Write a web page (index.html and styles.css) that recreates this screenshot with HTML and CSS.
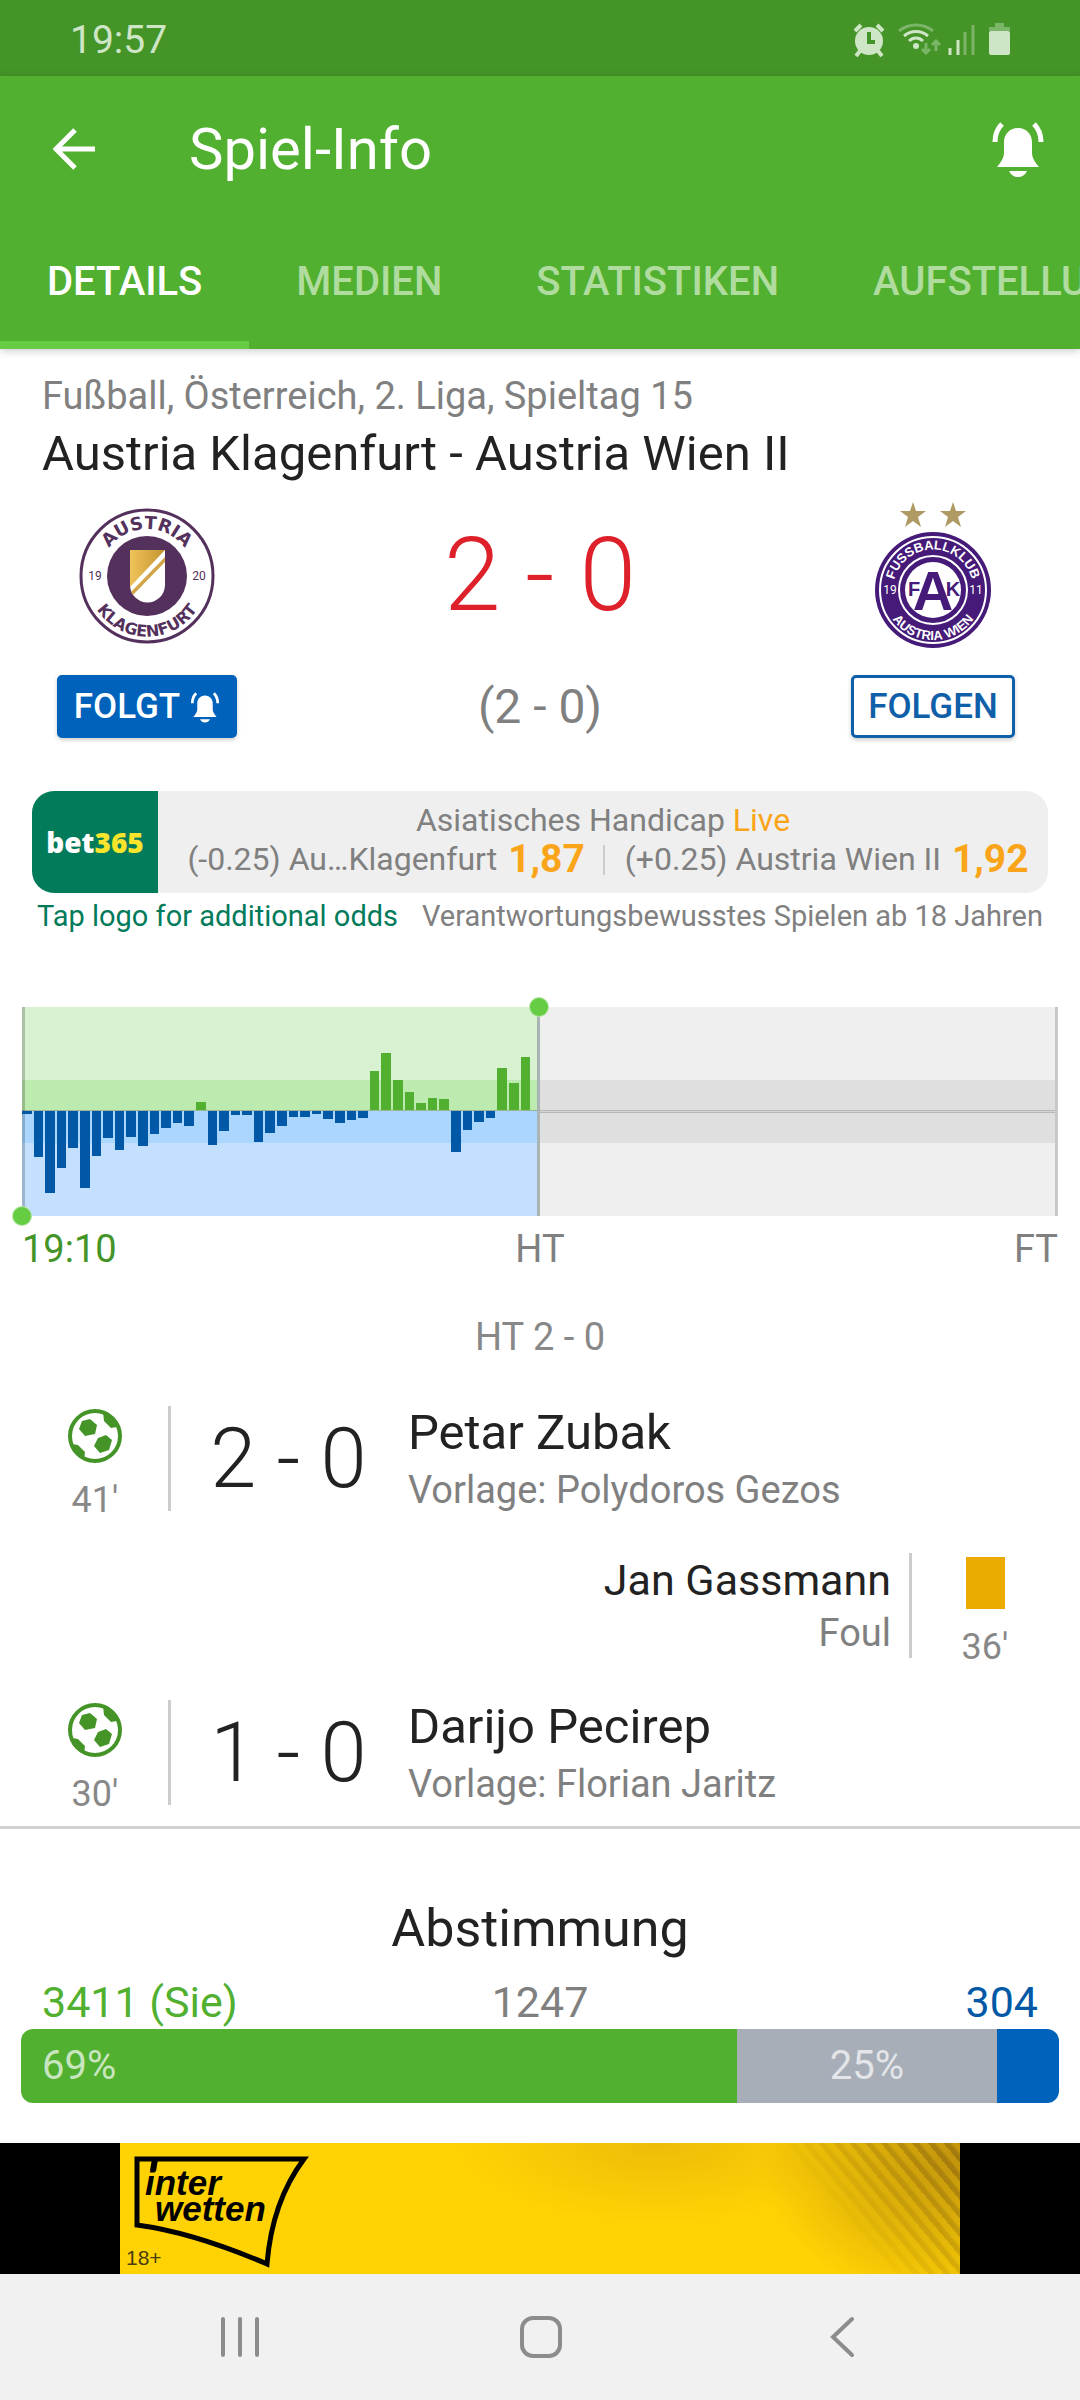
FILE: index.html
```html
<!DOCTYPE html>
<html lang="de">

<head>
    <meta charset="UTF-8">
    <meta name="viewport" content="width=device-width, initial-scale=1.0">
    <title>Spiel-Info</title>
    <link rel="stylesheet" href="styles.css">
</head>

<body>
    <svg class="defs" width="0" height="0">
        <symbol id="bell" viewBox="0 0 54 58">
            <path d="M27 8c-9 0-14 7-14 14v11c0 5-3 9-7 14h42c-4-5-7-9-7-14V22c0-7-5-14-14-14zM18 51c2 4 5 6 9 6s7-2 9-6z" fill="currentColor"/>
            <path d="M11 4C6 9 4 15 4 22M43 4c5 5 7 11 7 18" fill="none" stroke="currentColor" stroke-width="5"/>
        </symbol>
        <symbol id="ball" viewBox="0 0 54 54">
            <circle cx="27" cy="27" r="25" fill="#fff" stroke="#449428" stroke-width="4"/>
            <path d="M14 12l8-2 7 6-2 9-10 2-6-7zM30 29l8-3 6 5-3 10-9 3-6-7zM35 3l1 9 7 7 6-1C48 11 43 5 35 3zM4 35l6 1 7 7-1 8C9 48 5 42 4 35z" fill="#449428"/>
        </symbol>
    </svg>

    <div class="status-bar">
        <span>19:57</span>
        <svg class="status-icons" width="160" height="36" viewBox="0 0 160 36">
            <circle cx="17" cy="19" r="14" fill="#cfe6c6"/>
            <path d="M3 9l6-6M31 9l-6-6M8 29l-4 5M26 29l4 5" stroke="#cfe6c6" stroke-width="4"/>
            <path d="M17 10v10h6" fill="none" stroke="#449428" stroke-width="4"/>
            <g fill="none" stroke="#cfe6c6" stroke-width="3">
                <path d="M47 9c10-8 24-8 34 0" opacity=".4"/>
                <path d="M52 14c7-6 17-6 24 0M57 19c4-4 10-4 14 0"/>
            </g>
            <circle cx="64" cy="24" r="3" fill="#cfe6c6"/>
            <path d="M74 21v10M70 27l4 4 4-4M84 29V19M80 23l4-4 4 4" fill="none" stroke="#cfe6c6" stroke-width="3" opacity=".4"/>
            <path d="M98 26v7M106 18v15" stroke="#cfe6c6" stroke-width="3"/>
            <path d="M113 10v23M121 3v30" stroke="#cfe6c6" stroke-width="3" opacity=".4"/>
            <path d="M137 9V5h6V1h9v4h6v4z" fill="#cfe6c6" opacity=".4"/>
            <rect x="137" y="9" width="21" height="24" rx="2" fill="#cfe6c6"/>
        </svg>
    </div>

    <header>
        <div class="toolbar">
            <button class="icon-button" aria-label="Zurück">
                <svg width="42" height="42" viewBox="0 0 42 42"><path d="M22 2L3 21l19 19M3 21h39" fill="none" stroke="#fff" stroke-width="5"/></svg>
            </button>
            <h1>Spiel-Info</h1>
            <button class="icon-button" aria-label="Benachrichtigungen">
                <svg width="54" height="58"><use href="#bell"/></svg>
            </button>
        </div>
        <nav class="tabs">
            <a href="#details" class="active">DETAILS</a>
            <a href="#medien">MEDIEN</a>
            <a href="#statistiken">STATISTIKEN</a>
            <a href="#aufstellungen">AUFSTELLUNGEN</a>
        </nav>
    </header>

    <main id="details">
        <section class="match">
            <p class="league">Fußball, Österreich, 2. Liga, Spieltag 15</p>
            <h2>Austria Klagenfurt - Austria Wien II</h2>

            <div class="teams">
                <svg class="crest" width="180" height="160" viewBox="0 0 180 160">
                    <defs>
                        <linearGradient id="gold"><stop offset="0" stop-color="#f0c35a"/><stop offset="1" stop-color="#c49430"/></linearGradient>
                        <clipPath id="shield"><path d="M73 50h35v35a17 17 0 0 1-35 0z"/></clipPath>
                        <path id="k-top" d="M47 95a47 47 0 1 1 86 0"/>
                        <path id="k-bottom" d="M34 55a60 60 0 1 0 112 0"/>
                    </defs>
                    <circle cx="90" cy="76" r="66" fill="#fff" stroke="#54305c" stroke-width="3"/>
                    <circle cx="90" cy="76" r="40" fill="#54305c"/>
                    <g clip-path="url(#shield)">
                        <path d="M73 50h35v60H73z" fill="#fff"/>
                        <path d="M73 50h35L73 87z" fill="url(#gold)"/>
                        <path d="M73 93l35-36v5L73 98z" fill="#d2a548"/>
                    </g>
                    <g class="klagenfurt">
                        <text font-size="18"><textPath href="#k-top" startOffset="50%">AUSTRIA</textPath></text>
                        <text font-size="16"><textPath href="#k-bottom" startOffset="50%">KLAGENFURT</textPath></text>
                    </g>
                    <g class="crest-year" fill="#54305c">
                        <text x="38" y="80">19</text>
                        <text x="142" y="80">20</text>
                    </g>
                </svg>
                <div class="score">2 - 0</div>
                <svg class="crest" width="180" height="160" viewBox="0 0 180 160">
                    <defs>
                        <path id="w-top" d="M54 107a40 40 0 1 1 72 0"/>
                        <path id="w-bottom" d="M43 73a50 50 0 1 0 94 0"/>
                        <path id="star" d="M0-13l3 9h10l-8 6 3 10-8-6-8 6 3-10-8-6h10z" fill="#ae9a62"/>
                    </defs>
                    <use href="#star" x="70" y="15"/>
                    <use href="#star" x="110" y="15"/>
                    <circle cx="90" cy="90" r="58" fill="#451a78"/>
                    <circle cx="90" cy="90" r="53" fill="none" stroke="#fff" stroke-width="2"/>
                    <circle cx="90" cy="90" r="34" fill="none" stroke="#fff" stroke-width="2"/>
                    <circle cx="90" cy="90" r="28" fill="#fff"/>
                    <g class="fak">
                        <text x="71" y="96" font-size="20">F</text>
                        <text x="110" y="96" font-size="20">K</text>
                        <text x="90" y="110" font-size="56">A</text>
                    </g>
                    <g class="wien">
                        <text><textPath href="#w-top" startOffset="50%">FUSSBALLKLUB</textPath></text>
                        <text><textPath href="#w-bottom" startOffset="50%">AUSTRIA WIEN</textPath></text>
                    </g>
                    <g class="crest-year" fill="#fff">
                        <text x="47" y="94">19</text>
                        <text x="133" y="94">11</text>
                    </g>
                </svg>
                <button class="follow following">FOLGT <svg width="30" height="32"><use href="#bell"/></svg></button>
                <div class="half-score">(2 - 0)</div>
                <button class="follow">FOLGEN</button>
            </div>
        </section>

        <section class="betting">
            <div class="odds">
                <a class="bet-logo" href="#bet365">bet<span>365</span></a>
                <div class="odds-text">
                    <div>Asiatisches Handicap <span class="live">Live</span></div>
                    <div class="odds-line">
                        <span>(-0.25) Au…Klagenfurt</span>
                        <b>1,87</b>
                        <i></i>
                        <span>(+0.25) Austria Wien II</span>
                        <b>1,92</b>
                    </div>
                </div>
            </div>
            <div class="odds-notes">
                <a href="#odds">Tap logo for additional odds</a>
                <span>Verantwortungsbewusstes Spielen ab 18 Jahren</span>
            </div>
        </section>

        <section class="momentum">
            <div class="chart">
                <div class="half played">
                    <div class="bars" id="bars"></div>
                </div>
                <div class="half"></div>
                <span class="dot dot-start"></span>
                <span class="dot dot-now"></span>
            </div>
            <div class="chart-labels">
                <span class="kickoff">19:10</span>
                <span>HT</span>
                <span>FT</span>
            </div>
        </section>

        <section class="events">
            <p class="period">HT 2 - 0</p>

            <div class="event">
                <div class="event-icon">
                    <svg width="54" height="54"><use href="#ball"/></svg>
                    <span>41'</span>
                </div>
                <div class="event-score">2 - 0</div>
                <div class="event-text">
                    <h3>Petar Zubak</h3>
                    <p>Vorlage: Polydoros Gezos</p>
                </div>
            </div>

            <div class="event away">
                <div class="event-text">
                    <h3>Jan Gassmann</h3>
                    <p>Foul</p>
                </div>
                <div class="event-icon">
                    <div class="card"></div>
                    <span>36'</span>
                </div>
            </div>

            <div class="event">
                <div class="event-icon">
                    <svg width="54" height="54"><use href="#ball"/></svg>
                    <span>30'</span>
                </div>
                <div class="event-score">1 - 0</div>
                <div class="event-text">
                    <h3>Darijo Pecirep</h3>
                    <p>Vorlage: Florian Jaritz</p>
                </div>
            </div>
        </section>

        <section class="vote">
            <h2>Abstimmung</h2>
            <div class="vote-numbers">
                <span class="home">3411 (Sie)</span>
                <span>1247</span>
                <span class="guest">304</span>
            </div>
            <div class="vote-bar">
                <div class="vote-home" style="width: 69%">69%</div>
                <div class="vote-draw" style="width: 25%">25%</div>
                <div class="vote-guest" style="width: 6%"></div>
            </div>
        </section>
    </main>

    <div class="ad">
        <a class="banner" href="#interwetten">
            <svg width="200" height="131" viewBox="0 0 200 131">
                <path d="M17 16h167c-24 32-34 68-37 105C105 103 62 88 17 82z" fill="none" stroke="#000" stroke-width="5"/>
                <path d="M35 16l-2 12" stroke="#000" stroke-width="6"/>
                <g class="interwetten">
                    <text x="25" y="52">inter</text>
                    <text x="35" y="78">wetten</text>
                </g>
                <text class="age" x="6" y="122">18+</text>
            </svg>
        </a>
    </div>

    <footer class="nav-bar">
        <button aria-label="Letzte Apps">
            <svg width="44" height="44" viewBox="0 0 44 44"><path d="M5 4v36M22 4v36M39 4v36" stroke="#8c8c8c" stroke-width="4" stroke-linecap="round"/></svg>
        </button>
        <button aria-label="Startseite">
            <svg width="44" height="44" viewBox="0 0 44 44"><rect x="3" y="3" width="38" height="38" rx="11" fill="none" stroke="#8c8c8c" stroke-width="4"/></svg>
        </button>
        <button aria-label="Zurück">
            <svg width="44" height="44" viewBox="0 0 44 44"><path d="M32 4L13 22l19 18" fill="none" stroke="#8c8c8c" stroke-width="4" stroke-linecap="round"/></svg>
        </button>
    </footer>

    <script>
        // Druck pro Minute: positiv = Heim, negativ = Gast
        const momentum = [
            -3, -46, -82, -57, -37, -77, -45, -27, -39, -26, -35, -23, -17, -12, -15,
            8, -34, -20, -4, -4, -31, -22, -15, -6, -6, -3, -8, -12, -9, -7,
            39, 57, 30, 18, 7, 12, 11, -41, -19, -11, -7, 42, 27, 53, 0
        ];
        const bars = document.getElementById('bars');

        momentum.forEach(value => {
            const bar = document.createElement('div');
            bar.className = value > 0 ? 'bar up' : 'bar down';
            bar.style.height = Math.abs(value) + 'px';
            bars.appendChild(bar);
        });
    </script>
</body>

</html>
```
FILE: styles.css
```css
* {
    margin: 0;
    padding: 0;
    box-sizing: border-box;
}

body,
button {
    font-family: Roboto, "Liberation Sans", sans-serif;
}

body {
    display: flex;
    flex-direction: column;
    min-height: 100vh;
    background-color: #fff;
    color: #222;
    overflow-x: hidden;
}

button {
    background: none;
    border: none;
    cursor: pointer;
}

a {
    text-decoration: none;
}

svg {
    display: block;
}

h1,
h2,
h3 {
    font-weight: 400;
}

.defs {
    position: absolute;
}

/* Statusleiste */
.status-bar {
    display: flex;
    align-items: center;
    justify-content: space-between;
    height: 76px;
    padding: 4px 68px 0 70px;
    background-color: #449428;
    color: #cfe6c6;
    font-size: 39px;
}

/* Kopfbereich */
header {
    position: relative;
    z-index: 1;
    background-color: #52b030;
    box-shadow: 0 2px 8px rgba(0, 0, 0, 0.2);
}

.toolbar {
    display: flex;
    align-items: center;
    height: 137px;
    padding: 9px 35px 0 53px;
    color: #fff;
}

.toolbar h1 {
    flex: 1;
    margin-left: 94px;
    font-size: 58px;
}

.icon-button {
    color: #fff;
}

.tabs {
    display: flex;
    overflow: hidden;
}

.tabs a {
    padding: 0 47px;
    height: 136px;
    line-height: 138px;
    font-size: 40px;
    font-weight: 500;
    color: #b0dc9f;
}

.tabs .active {
    color: #fff;
    box-shadow: inset 0 -8px #66cc44;
}

main {
    flex: 1;
}

/* Begegnung */
.match {
    padding-top: 24px;
}

.league {
    padding: 0 42px;
    font-size: 38px;
    line-height: 46px;
    color: #808080;
}

.match h2 {
    margin-top: 6px;
    padding: 0 42px;
    font-size: 49px;
    line-height: 58px;
}

.teams {
    display: grid;
    grid-template-columns: 180px 1fr 180px;
    grid-template-rows: 160px 63px;
    row-gap: 15px;
    justify-items: center;
    padding: 17px 57px 0;
}

.klagenfurt text {
    font-family: "DejaVu Sans", sans-serif;
    font-weight: 700;
    text-anchor: middle;
    fill: #54305c;
}

.wien text,
.fak text {
    font-family: "Liberation Sans Narrow", "Liberation Sans", sans-serif;
    font-weight: 700;
    text-anchor: middle;
}

.wien text {
    font-size: 13px;
    fill: #fff;
}

.fak text {
    fill: #451a78;
}

.crest-year text {
    font-size: 12px;
    text-anchor: middle;
}

.score {
    font-size: 102px;
    font-weight: 300;
    line-height: 150px;
    color: #dd2029;
}

.half-score {
    font-size: 48px;
    line-height: 63px;
    color: #808080;
}

.follow {
    display: flex;
    align-items: center;
    justify-content: center;
    gap: 10px;
    height: 63px;
    padding: 0 14px;
    border: 3px solid #0f60a9;
    border-radius: 5px;
    font-size: 35px;
    font-weight: 500;
    color: #0f60a9;
    box-shadow: 0 2px 4px rgba(0, 0, 0, 0.2);
}

.following {
    width: 180px;
    padding: 0;
    border-color: #0062bb;
    background-color: #0062bb;
    color: #fff;
}

/* Quoten */
.betting {
    padding: 53px 32px 0;
}

.odds {
    display: flex;
    height: 102px;
    border-radius: 22px;
    overflow: hidden;
    background-color: #efefef;
}

.bet-logo {
    width: 126px;
    line-height: 102px;
    text-align: center;
    background-color: #027b5b;
    color: #fff;
    font-family: "Open Sans", sans-serif;
    font-size: 28px;
    font-weight: 800;
}

.bet-logo span {
    color: #f9e42c;
}

.odds-text {
    flex: 1;
    padding-top: 10px;
    text-align: center;
    font-size: 32px;
    line-height: 39px;
    color: #808080;
}

.odds-text .live,
.odds-text b {
    color: #faa519;
}

.odds-line {
    display: flex;
    justify-content: center;
    align-items: center;
    padding-left: 10px;
}

.odds-line b {
    margin-left: 11px;
    font-size: 39px;
    font-weight: 700;
}

.odds-line i {
    width: 2px;
    height: 30px;
    margin: 0 20px 0 18px;
    background-color: #ccc;
}

.odds-notes {
    display: flex;
    justify-content: space-between;
    margin-top: 5px;
    padding: 0 5px;
    font-size: 29px;
    line-height: 36px;
    color: #808080;
}

.odds-notes a {
    color: #027b5b;
}

/* Spielverlauf */
.momentum {
    padding: 73px 22px 0;
}

.chart {
    position: relative;
    display: flex;
    height: 209px;
}

.half {
    flex: 1;
    border-right: 3px solid #c8c8c8;
    background: linear-gradient(#efefef 73px, #dfdfdf 73px, #dfdfdf 103px, #b8b8b8 103px, #b8b8b8 104px, #d4d4d4 104px, #d4d4d4 105px, #b8b8b8 105px, #b8b8b8 106px, #dfdfdf 106px, #dfdfdf 136px, #efefef 136px);
}

.played {
    border-right-color: #a9b4b4;
    box-shadow: inset 3px 0 rgba(0, 0, 0, 0.2);
    background: linear-gradient(#d8f1d0 73px, #bdeaae 73px, #bdeaae 103px, #9bb39a 103px, #9bb39a 104px, #abd7fe 104px, #abd7fe 136px, #c3e1ff 136px);
}

.bars {
    display: flex;
    gap: 2px;
    height: 209px;
    margin-right: -5px;
}

.bar {
    flex: 1;
}

.up {
    align-self: flex-end;
    margin-bottom: 106px;
    background-color: #52b030;
}

.down {
    margin-top: 104px;
    background-color: #0058a6;
}

.dot {
    position: absolute;
    width: 18px;
    height: 18px;
    border-radius: 50%;
    background-color: #66cc44;
    box-shadow: 0 0 0 1px #b3e5a2;
}

.dot-start {
    bottom: -9px;
    left: -9px;
}

.dot-now {
    top: -9px;
    left: calc(50% - 10px);
}

.chart-labels {
    display: grid;
    grid-template-columns: 1fr 1fr 1fr;
    margin-top: 13px;
    font-size: 38px;
    line-height: 40px;
    text-align: center;
    color: #808080;
}

.chart-labels .kickoff {
    text-align: left;
    color: #449428;
}

.chart-labels :last-child {
    text-align: right;
}

/* Ereignisse */
.events {
    padding: 48px 22px 12px;
    border-bottom: 3px solid #d0d0d0;
}

.period {
    margin-bottom: 49px;
    font-size: 38px;
    line-height: 40px;
    text-align: center;
    color: #888;
}

.event {
    display: grid;
    grid-template-columns: 146px 238px 1fr;
    align-items: start;
    margin-bottom: 33px;
}

.event:last-child {
    margin-bottom: 0;
}

.event.away {
    grid-template-columns: 1fr 146px;
    text-align: right;
}

.event-icon {
    display: flex;
    flex-direction: column;
    align-items: center;
    gap: 17px;
    padding-top: 3px;
    font-size: 36px;
    line-height: 40px;
    color: #888;
}

.event-score {
    height: 105px;
    border-left: 3px solid #ccc;
    font-size: 83px;
    font-weight: 300;
    line-height: 106px;
    text-align: center;
}

.event-text h3 {
    margin-bottom: 7px;
    font-size: 49px;
    line-height: 54px;
}

.event:not(.away) .event-text {
    padding-left: 2px;
}

.event-text p {
    font-size: 38px;
    line-height: 46px;
    color: #808080;
}

.away .event-text {
    height: 105px;
    padding-right: 18px;
    border-right: 3px solid #ccc;
}

.away h3 {
    margin-bottom: 3px;
    font-size: 43px;
}

.card {
    width: 39px;
    height: 52px;
    margin: 1px;
    background-color: #ebab00;
}

/* Abstimmung */
.vote {
    padding: 70px 21px 40px;
}

.vote h2 {
    margin-bottom: 16px;
    font-size: 52px;
    line-height: 60px;
    text-align: center;
}

.vote-numbers {
    display: grid;
    grid-template-columns: 1fr 1fr 1fr;
    padding: 0 21px;
    font-size: 43px;
    line-height: 54px;
    text-align: center;
    color: #808080;
}

.vote-numbers .home {
    text-align: left;
    color: #52b030;
}

.vote-numbers .guest {
    text-align: right;
    color: #0058a6;
}

.vote-bar {
    display: flex;
    height: 74px;
    border-radius: 12px;
    overflow: hidden;
    font-size: 40px;
    line-height: 74px;
    color: rgba(255, 255, 255, 0.7);
}

.vote-home {
    padding-left: 21px;
    background-color: #52b030;
}

.vote-draw {
    background-color: #a7aeb8;
    text-align: center;
}

.vote-guest {
    background-color: #0062bb;
}

/* Werbung */
.ad {
    padding: 0 120px;
    background-color: #000;
}

.banner {
    position: relative;
    display: block;
    background:
        radial-gradient(ellipse 200px 80px at 64% 0, rgba(190, 140, 20, 0.3), transparent),
        radial-gradient(ellipse 200px 150px at 100% 10%, rgba(150, 105, 20, 0.6), transparent),
        #ffd204;
}

.banner::after {
    content: "";
    position: absolute;
    top: 0;
    right: 0;
    width: 220px;
    height: 131px;
    background: repeating-linear-gradient(50deg, rgba(110, 75, 15, 0.35) 0 4px, transparent 7px 12px);
    mask-image: linear-gradient(50deg, transparent 45%, #000 90%);
}

.interwetten text {
    font-family: "Liberation Sans", sans-serif;
    font-size: 35px;
    font-weight: 700;
    font-style: italic;
}

.age {
    font-family: "Liberation Sans", sans-serif;
    font-size: 21px;
    fill: #4a3c10;
}

/* Navigationsleiste */
.nav-bar {
    display: grid;
    grid-template-columns: 1fr 1fr 1fr;
    height: 126px;
    padding: 0 87px 0 89px;
    background-color: #f1f1f1;
}

.nav-bar button {
    display: flex;
    align-items: center;
    justify-content: center;
}
```
